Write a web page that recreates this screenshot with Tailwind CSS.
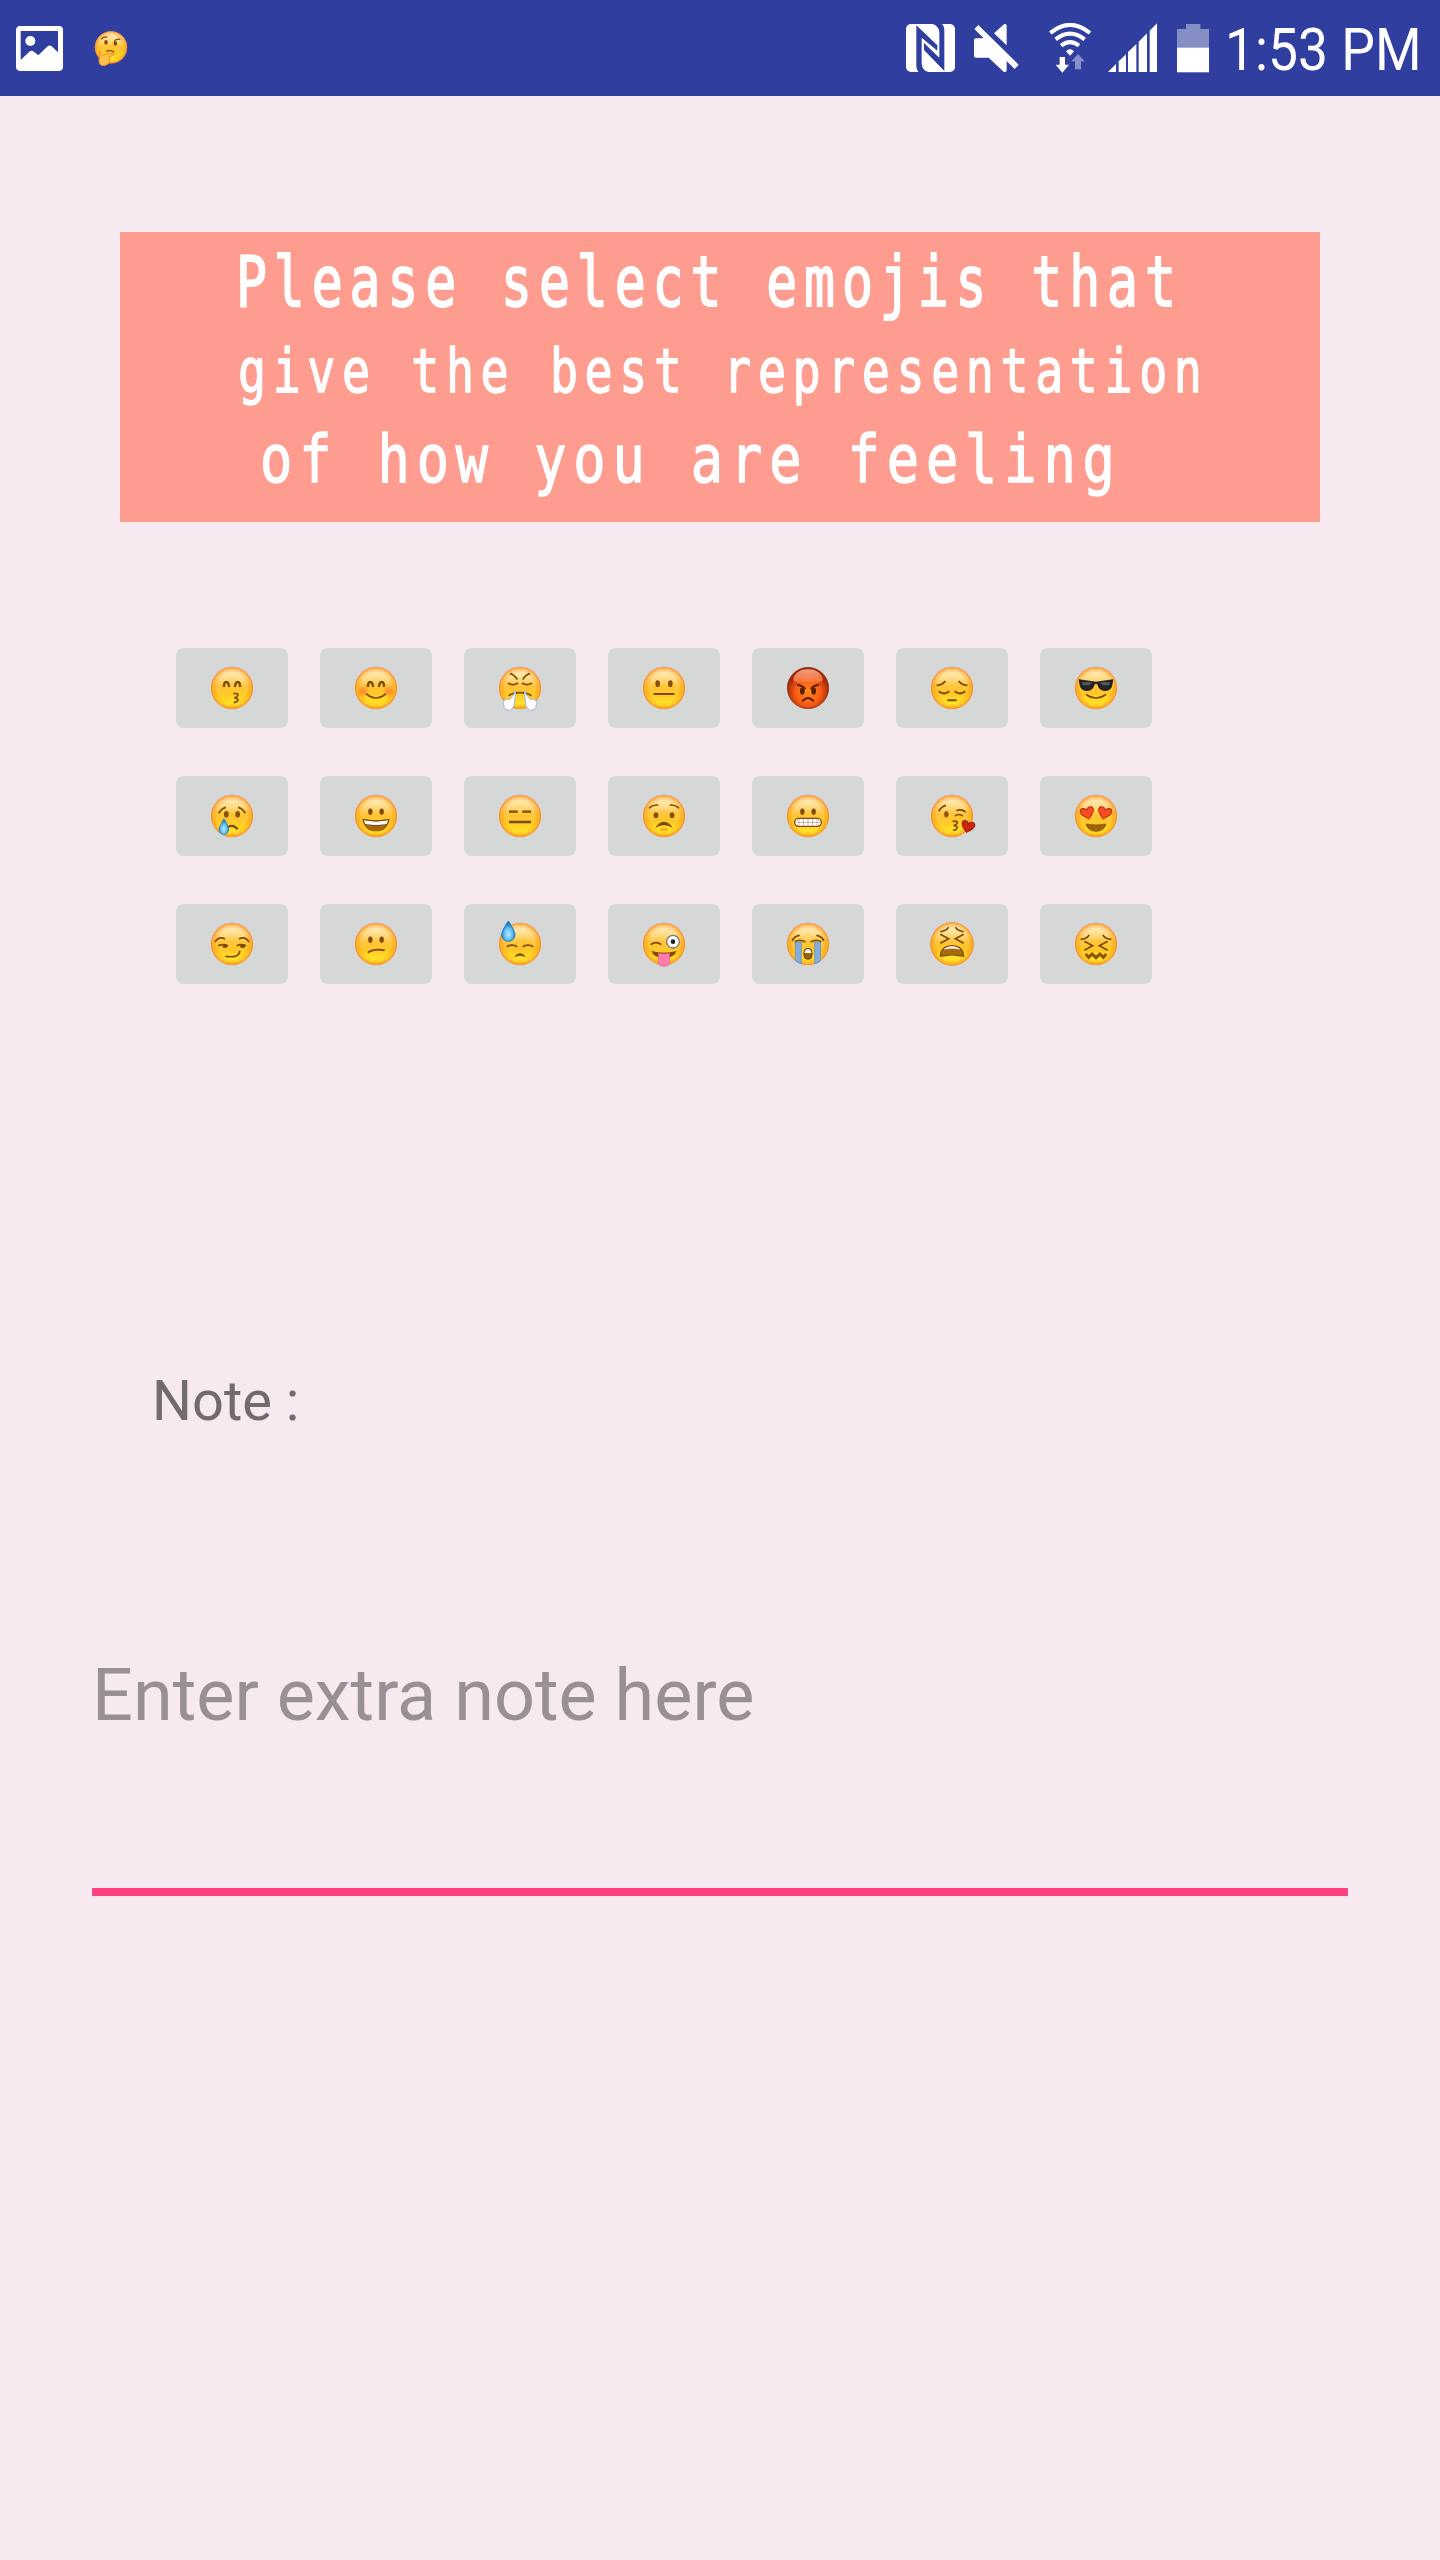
<!DOCTYPE html>
<html lang="en">
<head>
<meta charset="utf-8">
<title>Mood note</title>
<script src="https://cdn.jsdelivr.net/npm/@tailwindcss/browser@4"></script>
</head>
<body class="bg-[#f6e9ef] font-['Roboto',sans-serif]">
<svg class="absolute h-0 w-0" aria-hidden="true">
  <defs>
    <linearGradient id="skin" x1="0" y1="0" x2="0" y2="1"><stop offset="0" stop-color="#fff3d0"/><stop offset=".28" stop-color="#ffdb85"/><stop offset=".45" stop-color="#ffc53a"/><stop offset=".65" stop-color="#ffc727"/><stop offset=".88" stop-color="#ffe626"/><stop offset="1" stop-color="#ffd829"/></linearGradient>
    <radialGradient id="rim"><stop offset=".72" stop-color="#ff9a1c" stop-opacity="0"/><stop offset=".9" stop-color="#ff9a1c" stop-opacity=".5"/><stop offset="1" stop-color="#f98a1b"/></radialGradient>
    <radialGradient id="red" cy=".6"><stop offset="0" stop-color="#ff8a1e"/><stop offset=".6" stop-color="#fb5d15"/><stop offset="1" stop-color="#a52a0a"/></radialGradient>
    <linearGradient id="gloss" x1="0" y1="0" x2="0" y2="1"><stop offset="0" stop-color="#f0a080"/><stop offset="1" stop-color="#ff7d45" stop-opacity=".8"/></linearGradient>
    <radialGradient id="blush"><stop offset="0" stop-color="#ff7426" stop-opacity=".85"/><stop offset="1" stop-color="#ff7426" stop-opacity="0"/></radialGradient>
    <radialGradient id="water" cy=".65"><stop offset="0" stop-color="#b6ecff"/><stop offset=".65" stop-color="#5cbcf0"/><stop offset="1" stop-color="#1878c8"/></radialGradient>
    <g id="face"><circle r="62" fill="url(#skin)"/><circle r="63" fill="url(#rim)"/><circle r="63" fill="none" stroke="#d98a45" stroke-width="1" stroke-opacity=".6"/></g>
    <g id="eyes" fill="#7a4a08" stroke="#9a620c" stroke-width="2"><ellipse cx="-17" cy="-13" rx="6" ry="9"/><ellipse cx="17" cy="-13" rx="6" ry="9"/></g>
    <g id="happy" fill="none" stroke="#7a4a08" stroke-width="7"><path d="M-24-3Q-25-18-17-18Q-10-18-9-3M24-3Q25-18 17-18Q10-18 9-3"/></g>
    <path id="pucker" d="M0 17Q17 15 13 23Q10 29 3 29Q17 32 13 38Q10 44 1 43" fill="none" stroke="#7a4a08" stroke-width="5"/>
    <path id="heart" d="M0 19C-8 12-21 3-20-8C-18-18-5-18 0-8C5-18 18-18 20-8C21 3 8 12 0 19Z"/>
  </defs>
</svg>

<header class="flex h-24 items-center bg-[#303f9f] text-white">
  <svg class="ml-[16px] h-[45px] w-[47px]" viewBox="47 75 141 135"><path fill="#fff" fill-rule="evenodd" d="M58 75H177Q188 76 188 87V199Q187 209 177 210H58Q48 209 47 199V87Q48 76 58 75ZM61 90V177L87 152Q94 146 101 152L114 163L142 136Q148 131 154 136L173 154V90Z"/><circle cx="90" cy="120" r="15" fill="#fff"/></svg>
  <svg class="ml-[30px] h-9 w-9" viewBox="-54 -52 108 108"><g transform="scale(.77)"><use href="#face"/></g>
    <g fill="none" stroke="#7a4a08" stroke-width="4"><path d="M-29-24Q-22-35-11-30M10-20Q18-26 28-24M-14 12Q-4 7 10 14"/></g><ellipse cx="-15" cy="-15" rx="5" ry="7" fill="#7a4a08"/><ellipse cx="13" cy="-12" rx="5" ry="7" fill="#7a4a08"/>
    <path d="M-34 20Q-38 11-32 14L-26 24Q-10 18 6 18Q14 20 8 23L-8 30Q0 32-4 42Q-8 54-22 55Q-36 55-36 40Z" fill="#ffc14a" stroke="#ef8f25" stroke-width="3"/></svg>

  <svg class="ml-auto h-[50px] w-[49px]" viewBox="48 69 147 150"><rect x="48" y="72" width="147" height="144" rx="15" fill="#fff"/><path fill="#303f9f" d="M79 76L142 136V152L95 113V190Q96 212 116 216H86Q79 210 79 196ZM163 213L102 150V129L148 173V98Q147 78 128 72H156Q163 78 163 92Z"/></svg>
  <svg class="ml-[19px] h-[50px] w-[45px]" viewBox="252 69 135 150" fill="#fff"><path d="M253 87L265 75L386 194L374 207ZM252 121Q252 115 258 115H281L350 183V209Q350 219 341 215L296 173H258Q252 173 252 167ZM312 100L342 73Q350 70 350 78V136Z"/></svg>
  <svg class="ml-[30px] h-[50px] w-[43px]" viewBox="478 69 129 150"><path d="M482 99Q541 50 601 99M498 118Q541 84 585 118M514.500 137Q541 116 568 137" fill="none" stroke="#fff" stroke-width="12"/><path fill="#fff" d="M541 167L529 154Q541 141 553 154ZM510 171H526V194H538L518 218L498 194H510Z"/><path fill="#8790c8" d="M565 162L585 184H574V208H556V184H545Z"/></svg>
  <svg class="ml-[16px] h-[50px] w-[49px]" viewBox="654 69 147 150" fill="#fff"><path d="M654 216L678 192V216ZM686 216V184L708 163V216ZM714 216V156L739 132V216ZM746 216V125L771 100V216ZM779 216V92L801 70V216Z"/></svg>
  <svg class="ml-[20px] h-[50px] w-8" viewBox="861 69 96 150"><path fill="#858dc5" d="M888 72H931V87H957V218H861V87H888Z"/><path fill="#fff" d="M861 143H957V216H861Z"/></svg>
  <div class="ml-[16px] mr-[2px] w-[213px]"><div class="origin-left scale-x-[.89] whitespace-nowrap text-[60px] leading-[70px] pt-[3px]">1:53 PM</div></div>
</header>

<main>
  <h1 class="mx-auto mt-[136px] h-[290px] w-[1200px] overflow-hidden bg-[#fe9c8f] font-['DejaVu_Sans_Mono',monospace] font-normal text-white">
    <span class="ml-[116px] mt-[6px] block h-[88px] w-[1340px] origin-left scale-x-[.75] whitespace-pre text-[68.600px] leading-[88px] tracking-[9.2px] [-webkit-text-stroke:1.8px_white]">Please select emojis that</span>
    <span class="ml-[118px] block h-[88px] w-[1340px] origin-left scale-x-[.76] whitespace-pre text-[61.300px] leading-[90px] tracking-[8.7px] [-webkit-text-stroke:1.4px_white]">give the best representation</span>
    <span class="ml-[140px] block h-[88px] w-[1240px] origin-left scale-x-[.82] whitespace-pre text-[65.400px] leading-[90px] tracking-[8.4px] [-webkit-text-stroke:1.4px_white]">of how you are feeling</span>
  </h1>

  <section class="ml-[176px] mt-[126px] grid w-max grid-cols-[repeat(7,112px)] gap-x-8 gap-y-12 [&>button]:flex [&>button]:h-20 [&>button]:items-center [&>button]:justify-center [&>button]:rounded-lg [&>button]:bg-[#d6d8d7] [&_svg]:h-11 [&_svg]:w-11 [&_svg]:overflow-visible">
    <button><svg viewBox="-66 -66 132 132"><use href="#face"/><use href="#happy"/><use href="#pucker" x="4"/></svg></button>
    <button><svg viewBox="-66 -66 132 132"><use href="#face"/><circle cx="-39" cy="10" r="19" fill="url(#blush)"/><circle cx="39" cy="10" r="19" fill="url(#blush)"/><use href="#happy"/><path d="M-30 17Q0 43 30 17" fill="none" stroke="#7a4a08" stroke-width="5"/></svg></button>
    <button><svg viewBox="-66 -66 132 132"><use href="#face"/><path d="M-30-43Q-17-40-8-25M30-43Q17-40 8-25M-36-15Q-21-5-6-15M36-15Q21-5 6-15M-34 24Q-24 14 0 14Q24 14 34 24" fill="none" stroke="#7a4a08" stroke-width="5"/><g id="steam"><path d="M-13 7Q-14 30-17 42Q-15 56-24 61Q-31 72-37 64Q-49 67-48 54Q-54 42-46 37Q-39 29-32 35Q-18 24-13 7Z" fill="#fff" stroke="#9eb6ec" stroke-width="3"/></g><use href="#steam" transform="scale(-1 1)"/></svg></button>
    <button><svg viewBox="-66 -66 132 132"><use href="#face"/><ellipse cx="-19" cy="-13" rx="7" ry="10" fill="#84520a"/><ellipse cx="19" cy="-13" rx="7" ry="10" fill="#84520a"/><path d="M-31 18H31" stroke="#7a4a08" stroke-width="6"/></svg></button>
    <button><svg viewBox="-66 -66 132 132"><circle r="62" fill="url(#red)" stroke="#8a2a10" stroke-width="2"/><path d="M-44-27C-36-66 36-66 44-27Q44-18 32-18H-32Q-44-18-44-27Z" fill="url(#gloss)"/><path d="M-33-9Q-18-9-8 3M33-9Q18-9 8 3M-17 40Q0 20 17 40" fill="none" stroke="#592005" stroke-width="6"/><ellipse cx="-17" cy="9" rx="7" ry="11" fill="#592005"/><ellipse cx="17" cy="9" rx="7" ry="11" fill="#592005"/></svg></button>
    <button><svg viewBox="-66 -66 132 132"><use href="#face"/><path d="M-46-8Q-30-8-20-21M46-8Q30-8 20-21M-40 10Q-24 23-8 10M40 10Q24 23 8 10M-14 37H14" fill="none" stroke="#7a4a08" stroke-width="6"/></svg></button>
    <button><svg viewBox="-66 -66 132 132"><use href="#face"/><path d="M-52-26Q-25-22 0-19Q25-22 52-26L50-14Q48 9 27 9Q8 9 4-11Q0-13-4-11Q-8 9-27 9Q-48 9-50-14Z" fill="#222"/><path d="M-42-18L-12-17L-19-8H-40ZM42-18L12-17L19-8H40Z" fill="#555"/><path d="M-30 19Q0 41 30 19" fill="none" stroke="#7a4a08" stroke-width="5"/></svg></button>

    <button><svg viewBox="-66 -66 132 132"><use href="#face"/><path d="M-40-8Q-32-23-18-26M40-8Q32-23 18-26" fill="none" stroke="#7a4a08" stroke-width="5"/><ellipse cx="-17" cy="-5" rx="7" ry="10" fill="#84520a"/><ellipse cx="17" cy="-5" rx="7" ry="10" fill="#84520a"/><path d="M-12 33Q4 24 17 40" fill="none" stroke="#7a4a08" stroke-width="7"/><path d="M-24 8Q-10 31-10 40A14 15 0 0 1-39 40Q-38 31-24 8Z" fill="url(#water)" stroke="#1f80c4" stroke-width="2"/></svg></button>
    <button><svg viewBox="-66 -66 132 132"><use href="#face"/><use href="#eyes"/><path d="M-41 8Q0 18 41 8Q36 46 0 46Q-36 46-41 8Z" fill="#a8680c"/><path d="M-38 11Q0 20 38 11Q37 19 32 26Q0 32-32 26Q-37 19-38 11Z" fill="#fff" stroke="#6b3e08" stroke-width="3"/></svg></button>
    <button><svg viewBox="-66 -66 132 132"><use href="#face"/><path d="M-33-13H-7M7-13H33M-33 18H33" stroke="#7a4a08" stroke-width="7"/></svg></button>
    <button><svg viewBox="-66 -66 132 132"><use href="#face"/><path d="M-45-23Q-35-34-17-33M45-23Q35-34 17-33" fill="none" stroke="#7a4a08" stroke-width="5"/><ellipse cx="-24" cy="-2" rx="7" ry="9" fill="#84520a"/><ellipse cx="24" cy="-2" rx="7" ry="9" fill="#84520a"/><path d="M-27 38Q-16 17 0 17Q16 17 27 38Q16 28 0 28Q-16 28-27 38Z" fill="#7a4a08"/><ellipse cy="41" rx="13" ry="4" fill="#ffad1a"/></svg></button>
    <button><svg viewBox="-66 -66 132 132"><use href="#face"/><use href="#eyes"/><rect x="-40" y="7" width="80" height="24" rx="12" fill="#fff" stroke="#7a4a20" stroke-width="4"/><path d="M-37 19H37M-27 9V29M-14 9V29M0 9V29M14 9V29M27 9V29" stroke="#b98e76" stroke-width="2"/></svg></button>
    <button><svg viewBox="-66 -66 132 132"><use href="#face"/><path d="M-40-14Q-32-29-18-32M13-16Q28-22 41-12M9 0Q20-9 32 0" fill="none" stroke="#7a4a08" stroke-width="5"/><ellipse cx="-17" cy="-5" rx="6" ry="9" fill="#84520a" stroke="#a66c10" stroke-width="2"/><use href="#pucker" x="2" y="-1"/><use href="#heart" transform="translate(48 31) rotate(14) scale(.96)" fill="#cf2411" stroke="#8f1710" stroke-width="3"/></svg></button>
    <button><svg viewBox="-66 -66 132 132"><use href="#face"/><use href="#heart" transform="translate(-26 -10) rotate(-14)" fill="#fb4a22" stroke="#b92a10" stroke-width="3"/><use href="#heart" transform="translate(26 -10) rotate(14)" fill="#fb4a22" stroke="#b92a10" stroke-width="3"/><path d="M-30 24Q0 30 30 24Q24 46 0 46Q-24 46-30 24Z" fill="#a3620d" stroke="#7a4a08" stroke-width="2"/></svg></button>

    <button><svg viewBox="-66 -66 132 132"><use href="#face"/><path d="M-51-6Q-39-25-21-15M51-6Q39-25 21-15M-42 5Q-28-1-12 5M14 5Q28-1 42 5M-20 37Q23 43 23 20" fill="none" stroke="#7a4a08" stroke-width="5"/><ellipse cx="-21" cy="7" rx="8" ry="5" fill="#7a4a08"/><ellipse cx="32" cy="7" rx="8" ry="5" fill="#7a4a08"/></svg></button>
    <button><svg viewBox="-66 -66 132 132"><use href="#face"/><use href="#eyes"/><path d="M-25 26Q-5 12 26 19" fill="none" stroke="#7a4a08" stroke-width="5"/></svg></button>
    <button><svg viewBox="-66 -66 132 132"><use href="#face"/><path d="M-40 8Q-24-1-8 8M40 8Q24-1 8 8" fill="none" stroke="#7a4a08" stroke-width="5"/><path d="M-18 40Q0 15 18 40Q0 31-18 40Z" fill="#7a4a08"/><path d="M-35-69Q-15-39-15-28A20 20 0 0 1-55-28Q-55-39-35-69Z" fill="url(#water)" stroke="#1f80c4" stroke-width="3"/></svg></button>
    <button><svg viewBox="-66 -66 132 132"><use href="#face"/><path d="M-40 2Q-24-10-8 2" fill="none" stroke="#7a4a08" stroke-width="5"/><circle cx="27" cy="-7" r="19" fill="#fff" stroke="#777" stroke-width="4"/><circle cx="27" cy="-7" r="7" fill="#222"/><path d="M-38 21Q0 31 38 21Q30 43 0 43Q-30 43-38 21Z" fill="#83480a"/><path d="M-17 28Q0 32 17 28V52Q17 67 0 67Q-17 67-17 52Z" fill="#ff7eae" stroke="#e0568a" stroke-width="2"/></svg></button>
    <button><svg viewBox="-66 -66 132 132"><use href="#face"/><path d="M-38-6H-20V60Q-30 57-38 50ZM38-6H20V60Q30 57 38 50Z" fill="#86acdf" stroke="#5f87bd" stroke-width="2"/><path d="M-48-9Q-40-25-25-26M48-9Q40-25 25-26M-40-7Q-24-16-8-6M40-7Q24-16 8-6" fill="none" stroke="#7a4a08" stroke-width="5"/><rect x="-12" y="13" width="24" height="33" rx="12" fill="#9b600c" stroke="#6b3e08" stroke-width="3"/><path d="M-10 27V24Q-8 15 0 15Q8 15 10 24V27Z" fill="#fff"/></svg></button>
    <button><svg viewBox="-66 -66 132 132"><use href="#face" transform="scale(1.03)"/><path d="M-35-37Q-19-38-10-50M35-37Q19-38 10-50M-35-29L-10-16L-35-2M35-29L10-16L35-2" fill="none" stroke="#7a4a08" stroke-width="5"/><path d="M-35 37Q-35 5 0 5Q35 5 35 37Q0 28-35 37Z" fill="#a8680c" stroke="#6b3e08" stroke-width="3"/><path d="M-25 17Q-14 7 0 7Q14 7 25 17Q0 10-25 17Z" fill="#fff"/></svg></button>
    <button><svg viewBox="-66 -66 132 132"><use href="#face"/><path d="M-46-14Q-30-14-20-27M46-14Q30-14 20-27M-35-8L-10 5L-35 19M35-8L10 5L35 19" fill="none" stroke="#7a4a08" stroke-width="5"/><path d="M-31 30L-22 40L-12 30L0 41L12 30L22 40L31 30" fill="none" stroke="#8a560c" stroke-width="9"/></svg></button>
  </section>

  <p class="ml-[152px] mt-[381px] text-[56px] leading-[72px] text-[#716b6e]">Note :</p>
  <div class="mx-[92px] mt-[217px] h-[242px] border-b-8 border-[#ff4081] text-[72px] leading-[84px] text-[#989094]">Enter extra note here</div>
</main>
</body>
</html>
